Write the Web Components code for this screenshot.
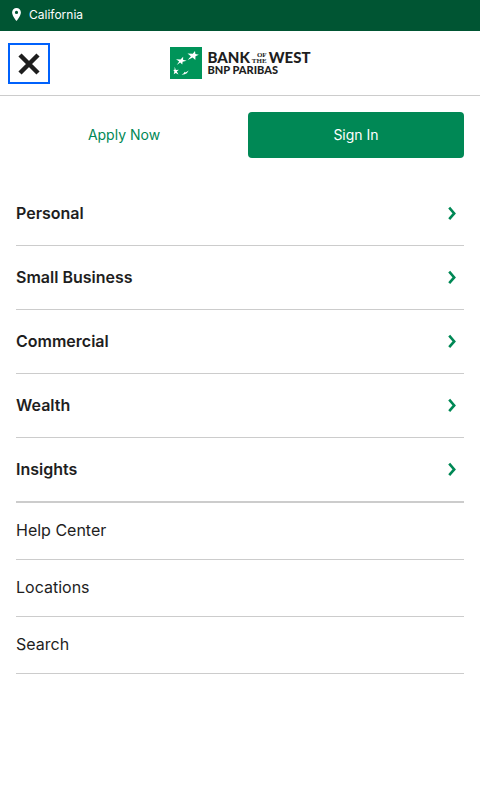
<!DOCTYPE html>
<html lang="en">
<head>
<meta charset="utf-8">
<meta name="viewport" content="width=device-width, initial-scale=1">
<title>Bank of the West</title>
<style>
body { margin: 0; background: #fff; color: #1e1e1e; font: 16px/24px Inter, "Liberation Sans", sans-serif; }
</style>
</head>
<body>
<bank-menu></bank-menu>
<script>
const define = (name, html) => {
  const template = document.createElement('template');
  template.innerHTML = '<style>*{box-sizing:border-box}a{color:inherit;text-decoration:none}svg{display:block}</style>' + html;
  customElements.define(name, class extends HTMLElement {
    constructor() {
      super();
      this.attachShadow({ mode: 'open' }).append(template.content.cloneNode(true));
    }
  });
};

define('location-bar', `
<style>
:host { display: block; background: #005533; color: #fff; font-size: 12px; line-height: 16px; }
a { display: flex; align-items: center; gap: 8px; padding: 7px 12px 8px; width: max-content; }
svg { margin-bottom: 2px; }
</style>
<a href="#location"><svg width="9" height="13" viewBox="0 0 9 13" aria-hidden="true"><path fill="#fff" fill-rule="evenodd" d="M4.5 0A4.4 4.4 0 0 0 .1 4.4C.1 7.700 4.500 13 4.500 13S8.900 7.700 8.900 4.400A4.400 4.400 0 0 0 4.500 0ZM4.500 6A1.600 1.600 0 1 1 4.500 2.800 1.600 1.600 0 0 1 4.500 6Z"/></svg><span><slot></slot></span></a>`);

define('bank-logo', `
<style>
:host { display: block; }
a { display: flex; align-items: start; gap: 6px; padding-bottom: 2px; color: #1e1e1e; font-family: Lato, sans-serif; font-weight: 900; }
.words { display: grid; padding-top: 3px; }
.top { display: flex; align-items: center; gap: 2px; font-size: 15px; line-height: 15px; }
.small { display: grid; justify-items: end; padding-top: 2px; font: 700 7px/6px "Liberation Serif", serif; }
.bottom { font-size: 11px; line-height: 10px; }
</style>
<a href="#home">
<svg width="32" height="32" viewBox="0 0 32 32" aria-hidden="true">
<path fill="#009459" d="M0 0h32v32H0z"/>
<g fill="#fff">
<path d="M17.500 6.500 22.800 6.800 25 4l.4 3 3.400.8-3.300 1.500-.2 3.600-2.600-2.400-5 2.500 3.200-3.700Z"/>
<path d="m6 12.200 4.500.2 2.700-2.700-.2 3.100 3.600.9-4 1.100-.3 2.600-2.100-1.900L6.700 18l2.500-3.400Z"/>
<path d="m4.700 19.800 1.100 3.100 3.100-.2-2.100 1.900 1.700 2.900-2.800-1.500-2 1.200.7-2.700-1.100-1.600 1.300-.2Z"/>
<path d="m18.700 23.400-1.900 2.900-2.100 1-3.200.5 2.300-1.500.8-1.500 1 .6Z"/>
</g></svg>
<span class="words"><span class="top"><span>BANK</span><span class="small"><span>OF</span><span>THE</span></span><span>WEST</span></span><span class="bottom">BNP PARIBAS</span></span>
</a>`);

define('site-header', `
<style>
:host { display: grid; grid-template-columns: 1fr auto 1fr; align-items: center; padding: 12px 8px 11px; border-bottom: 1px solid #ccc; }
button { display: grid; place-items: center; width: 42px; height: 41px; padding: 0; border: 2px solid #0061fc; background: #fff; color: #1e1e1e; }
</style>
<button type="button" aria-label="Close menu"><svg width="22" height="22" viewBox="0 0 22 22" aria-hidden="true"><path d="m2 2 18 18M20 2 2 20" fill="none" stroke="currentColor" stroke-width="4.500"/></svg></button>
<slot></slot>`);

define('account-actions', `
<style>
:host { display: grid; grid-template-columns: 1fr 1fr; gap: 16px; padding: 16px; font-size: 14px; line-height: 20px; }
a { padding: 13px 16px; border-radius: 4px; text-align: center; color: #008855; }
.primary { background: #008855; color: #fff; }
</style>
<a href="#apply">Apply Now</a><a class="primary" href="#signin">Sign In</a>`);

define('menu-section', `
<style>
:host { display: block; border-bottom: 1px solid #ccc; font-weight: 600; }
button { display: flex; justify-content: space-between; align-items: center; width: 100%; padding: 19px 8px 20px 0; border: 0; background: none; color: inherit; font: inherit; text-align: left; }
svg { color: #008855; }
</style>
<button type="button"><span><slot></slot></span><svg width="8" height="14" viewBox="0 0 8 14" aria-hidden="true"><path d="m1.200 1.700 5 5.700-5 5.700" fill="none" stroke="currentColor" stroke-width="2.600"/></svg></button>`);

define('menu-link', `
<style>
:host { display: block; border-bottom: 1px solid #ccc; }
a { display: block; padding: 15px 0 17px; }
</style>
<a href="#page"><slot></slot></a>`);

define('bank-menu', `
<style>
:host { display: block; }
nav { padding: 8px 16px 16px; }
.links { border-top: 1px solid #ccc; }
</style>
<location-bar>California</location-bar>
<site-header><bank-logo></bank-logo></site-header>
<account-actions></account-actions>
<nav aria-label="Main">
<menu-section>Personal</menu-section>
<menu-section>Small Business</menu-section>
<menu-section>Commercial</menu-section>
<menu-section>Wealth</menu-section>
<menu-section>Insights</menu-section>
<div class="links">
<menu-link>Help Center</menu-link>
<menu-link>Locations</menu-link>
<menu-link>Search</menu-link>
</div>
</nav>`);
</script>
</body>
</html>
